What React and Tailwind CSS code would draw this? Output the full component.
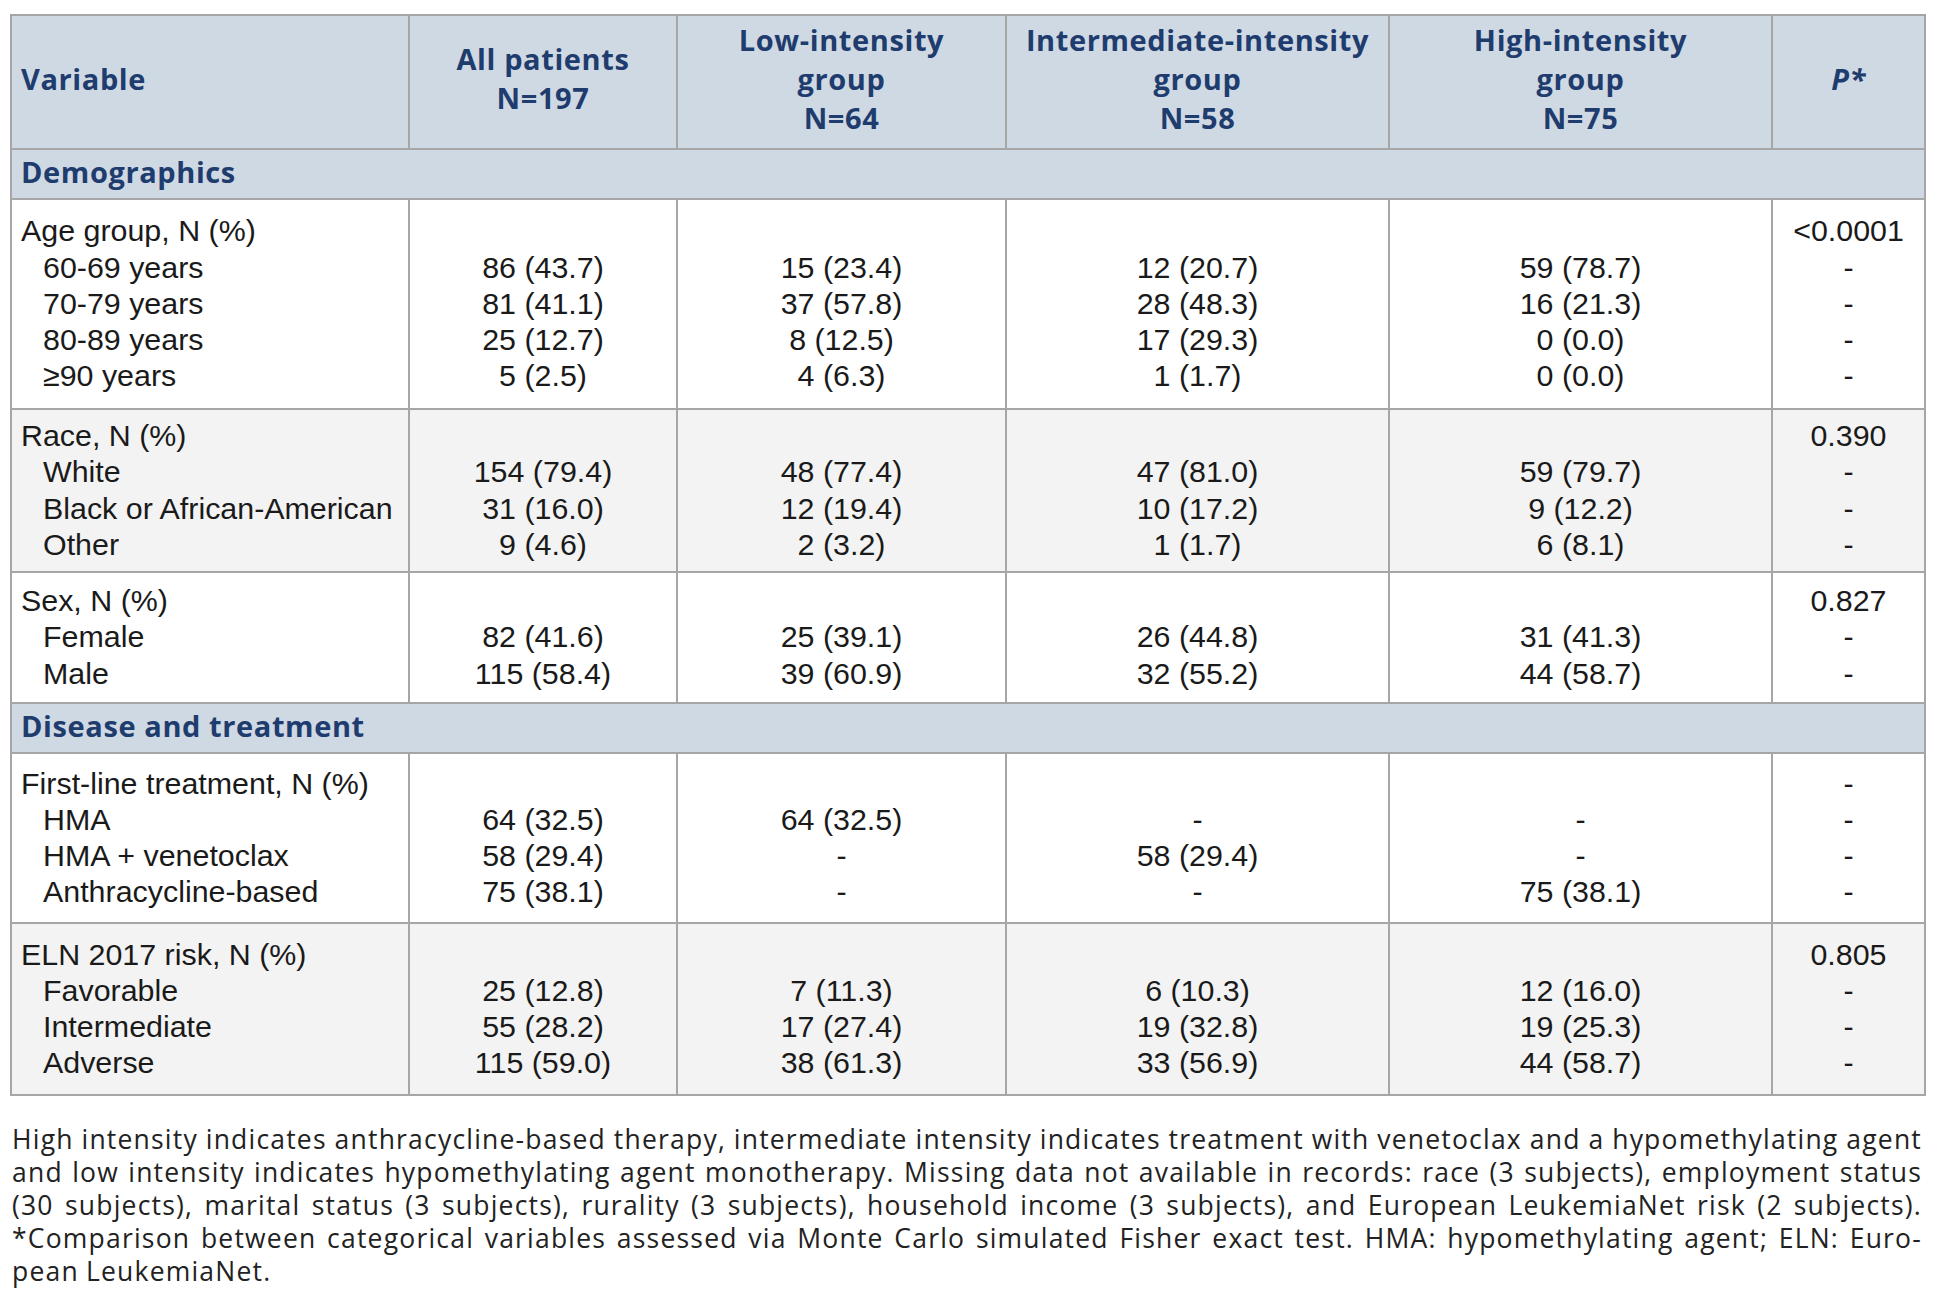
import React from "react";

const head = "font-['Open_Sans',sans-serif] font-bold text-[#1f3c6e] tracking-[0.6px]";

const groups = [
  {
    label: "Age group, N (%)",
    h: "h-[210px]",
    bg: "bg-white",
    p: "<0.0001",
    items: [
      ["60-69 years", "86 (43.7)", "15 (23.4)", "12 (20.7)", "59 (78.7)"],
      ["70-79 years", "81 (41.1)", "37 (57.8)", "28 (48.3)", "16 (21.3)"],
      ["80-89 years", "25 (12.7)", "8 (12.5)", "17 (29.3)", "0 (0.0)"],
      ["≥90 years", "5 (2.5)", "4 (6.3)", "1 (1.7)", "0 (0.0)"],
    ],
  },
  {
    label: "Race, N (%)",
    h: "h-[163px]",
    bg: "bg-[#f3f3f3]",
    p: "0.390",
    items: [
      ["White", "154 (79.4)", "48 (77.4)", "47 (81.0)", "59 (79.7)"],
      ["Black or African-American", "31 (16.0)", "12 (19.4)", "10 (17.2)", "9 (12.2)"],
      ["Other", "9 (4.6)", "2 (3.2)", "1 (1.7)", "6 (8.1)"],
    ],
  },
  {
    label: "Sex, N (%)",
    h: "h-[131px]",
    bg: "bg-white",
    p: "0.827",
    items: [
      ["Female", "82 (41.6)", "25 (39.1)", "26 (44.8)", "31 (41.3)"],
      ["Male", "115 (58.4)", "39 (60.9)", "32 (55.2)", "44 (58.7)"],
    ],
  },
];

const groups2 = [
  {
    label: "First-line treatment, N (%)",
    h: "h-[170px]",
    bg: "bg-white",
    p: "-",
    items: [
      ["HMA", "64 (32.5)", "64 (32.5)", "-", "-"],
      ["HMA + venetoclax", "58 (29.4)", "-", "58 (29.4)", "-"],
      ["Anthracycline-based", "75 (38.1)", "-", "-", "75 (38.1)"],
    ],
  },
  {
    label: "ELN 2017 risk, N (%)",
    h: "h-[172px]",
    bg: "bg-[#f3f3f3]",
    p: "0.805",
    items: [
      ["Favorable", "25 (12.8)", "7 (11.3)", "6 (10.3)", "12 (16.0)"],
      ["Intermediate", "55 (28.2)", "17 (27.4)", "19 (32.8)", "19 (25.3)"],
      ["Adverse", "115 (59.0)", "38 (61.3)", "33 (56.9)", "44 (58.7)"],
    ],
  },
];

const cell = "border-2 border-[#a6a6a6] align-middle";

function Section({ title }) {
  return (
    <tr className="h-[50px] bg-[#cfd9e3]">
      <td colSpan={6} className={`${cell} pb-[5px] pl-[9px] text-[29px] leading-[36px] ${head}`}>
        {title}
      </td>
    </tr>
  );
}

function Group({ g }) {
  return (
    <tr className={`${g.h} ${g.bg}`}>
      <td className={`${cell} pb-[2px] pl-[9px]`}>
        <div>{g.label}</div>
        {g.items.map((it) => (
          <div key={it[0]} className="pl-[22px]">
            {it[0]}
          </div>
        ))}
      </td>
      {[1, 2, 3, 4].map((c) => (
        <td key={c} className={`${cell} pb-[2px] text-center`}>
          <div>&nbsp;</div>
          {g.items.map((it) => (
            <div key={it[0]}>{it[c]}</div>
          ))}
        </td>
      ))}
      <td className={`${cell} pb-[2px] text-center`}>
        <div>{g.p}</div>
        {g.items.map((it) => (
          <div key={it[0]}>-</div>
        ))}
      </td>
    </tr>
  );
}

const notes = [
  "High intensity indicates anthracycline-based therapy, intermediate intensity indicates treatment with venetoclax and a hypomethylating agent",
  "and low intensity indicates hypomethylating agent monotherapy. Missing data not available in records: race (3 subjects), employment status",
  "(30 subjects), marital status (3 subjects), rurality (3 subjects), household income (3 subjects), and European LeukemiaNet risk (2 subjects).",
  "*Comparison between categorical variables assessed via Monte Carlo simulated Fisher exact test. HMA: hypomethylating agent; ELN: Euro-",
];

export default function App() {
  return (
    <div className="min-h-screen bg-white pl-[10px] pr-[15px] pt-[14px]">
      <table className="w-[1914px] table-fixed border-collapse font-['Liberation_Sans',Arial,sans-serif] text-[30.4px] leading-[36.2px] text-[#1a1a1a]">
        <colgroup>
          <col className="w-[398px]" />
          <col className="w-[268px]" />
          <col className="w-[329px]" />
          <col className="w-[383px]" />
          <col className="w-[383px]" />
          <col className="w-[153px]" />
        </colgroup>
        <thead>
          <tr className={`h-[134px] bg-[#cfd9e3] text-[29px] leading-[39px] ${head}`}>
            <th className={`${cell} pb-[8px] pl-[9px] text-left`}>Variable</th>
            <th className={`${cell} pb-[8px] text-center`}>
              All patients
              <br />
              N=197
            </th>
            <th className={`${cell} pb-[8px] text-center`}>
              Low-intensity
              <br />
              group
              <br />
              N=64
            </th>
            <th className={`${cell} pb-[8px] text-center`}>
              Intermediate-intensity
              <br />
              group
              <br />
              N=58
            </th>
            <th className={`${cell} pb-[8px] text-center`}>
              High-intensity
              <br />
              group
              <br />
              N=75
            </th>
            <th className={`${cell} pb-[8px] text-center italic`}>P*</th>
          </tr>
        </thead>
        <tbody>
          <Section title="Demographics" />
          {groups.map((g) => (
            <Group key={g.label} g={g} />
          ))}
          <Section title="Disease and treatment" />
          {groups2.map((g) => (
            <Group key={g.label} g={g} />
          ))}
        </tbody>
      </table>

      {/* footnote */}
      <div className="mt-[27px] w-[1912px] pl-[2px] font-['Open_Sans',sans-serif] text-[26.5px] leading-[33px] tracking-[1.2px] [word-spacing:-1px] text-[#222]">
        {notes.map((n) => (
          <div key={n} className="whitespace-nowrap text-justify [text-align-last:justify]">
            {n}
          </div>
        ))}
        <div>pean LeukemiaNet.</div>
      </div>
    </div>
  );
}
